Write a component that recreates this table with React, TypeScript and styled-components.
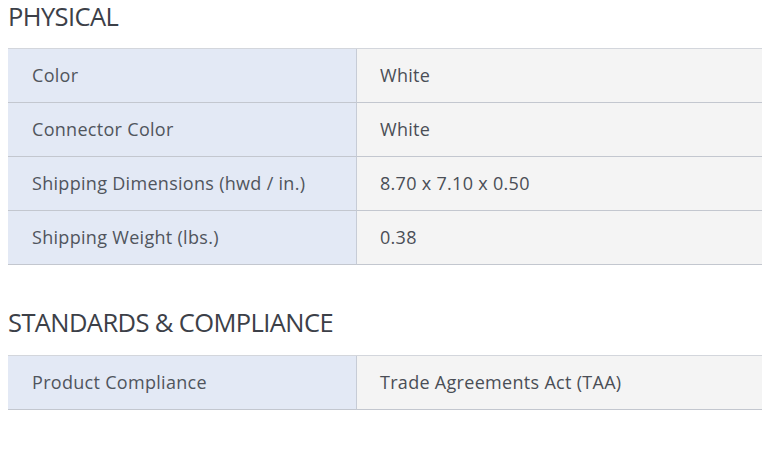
import React from "react";
import styled, { createGlobalStyle } from "styled-components";

const Global = createGlobalStyle`
  html, body { margin: 0; padding: 0; background: #fff; overflow: hidden; }
  body { font-family: "Open Sans", "Noto Sans", sans-serif; }
`;

const Page = styled.div`
  padding: 0 0 0 8px;
  display: flex;
  flex-direction: column;
`;

const Heading = styled.h2<{ $top: number }>`
  margin: ${(p) => p.$top}px 0 0 0;
  font-family: "Open Sans", sans-serif;
  font-weight: 400;
  font-size: 25.5px;
  line-height: 33px;
  color: #3c4048;
  letter-spacing: -0.6px;
`;

const Table = styled.div<{ $top: number }>`
  margin-top: ${(p) => p.$top}px;
  display: grid;
  grid-template-columns: 349px 1fr;
  border-top: 1px solid #d3d6dc;
`;

const Cell = styled.div`
  box-sizing: border-box;
  height: 54px;
  padding-bottom: 2px;
  display: flex;
  align-items: center;
  font-size: 18px;
  letter-spacing: 0.3px;
  border-bottom: 1px solid #c3c7cf;
`;

const Label = styled(Cell)`
  padding-left: 24px;
  background: #e3e9f5;
  border-right: 1px solid #c7ccd6;
  color: #50555d;
`;

const Value = styled(Cell)`
  padding-left: 23px;
  background: #f4f4f4;
  color: #4a4e56;
`;

const physical: [string, string][] = [
  ["Color", "White"],
  ["Connector Color", "White"],
  ["Shipping Dimensions (hwd / in.)", "8.70 x 7.10 x 0.50"],
  ["Shipping Weight (lbs.)", "0.38"],
];

const compliance: [string, string][] = [["Product Compliance", "Trade Agreements Act (TAA)"]];

function SpecTable({ rows, top }: { rows: [string, string][]; top: number }) {
  return (
    <Table $top={top}>
      {rows.map(([k, v]) => (
        <React.Fragment key={k}>
          <Label>{k}</Label>
          <Value>{v}</Value>
        </React.Fragment>
      ))}
    </Table>
  );
}

export default function App() {
  return (
    <Page>
      <Global />
      <Heading $top={0}>PHYSICAL</Heading>
      <SpecTable rows={physical} top={15} />
      <Heading $top={41}>STANDARDS &amp; COMPLIANCE</Heading>
      <SpecTable rows={compliance} top={16} />
    </Page>
  );
}
